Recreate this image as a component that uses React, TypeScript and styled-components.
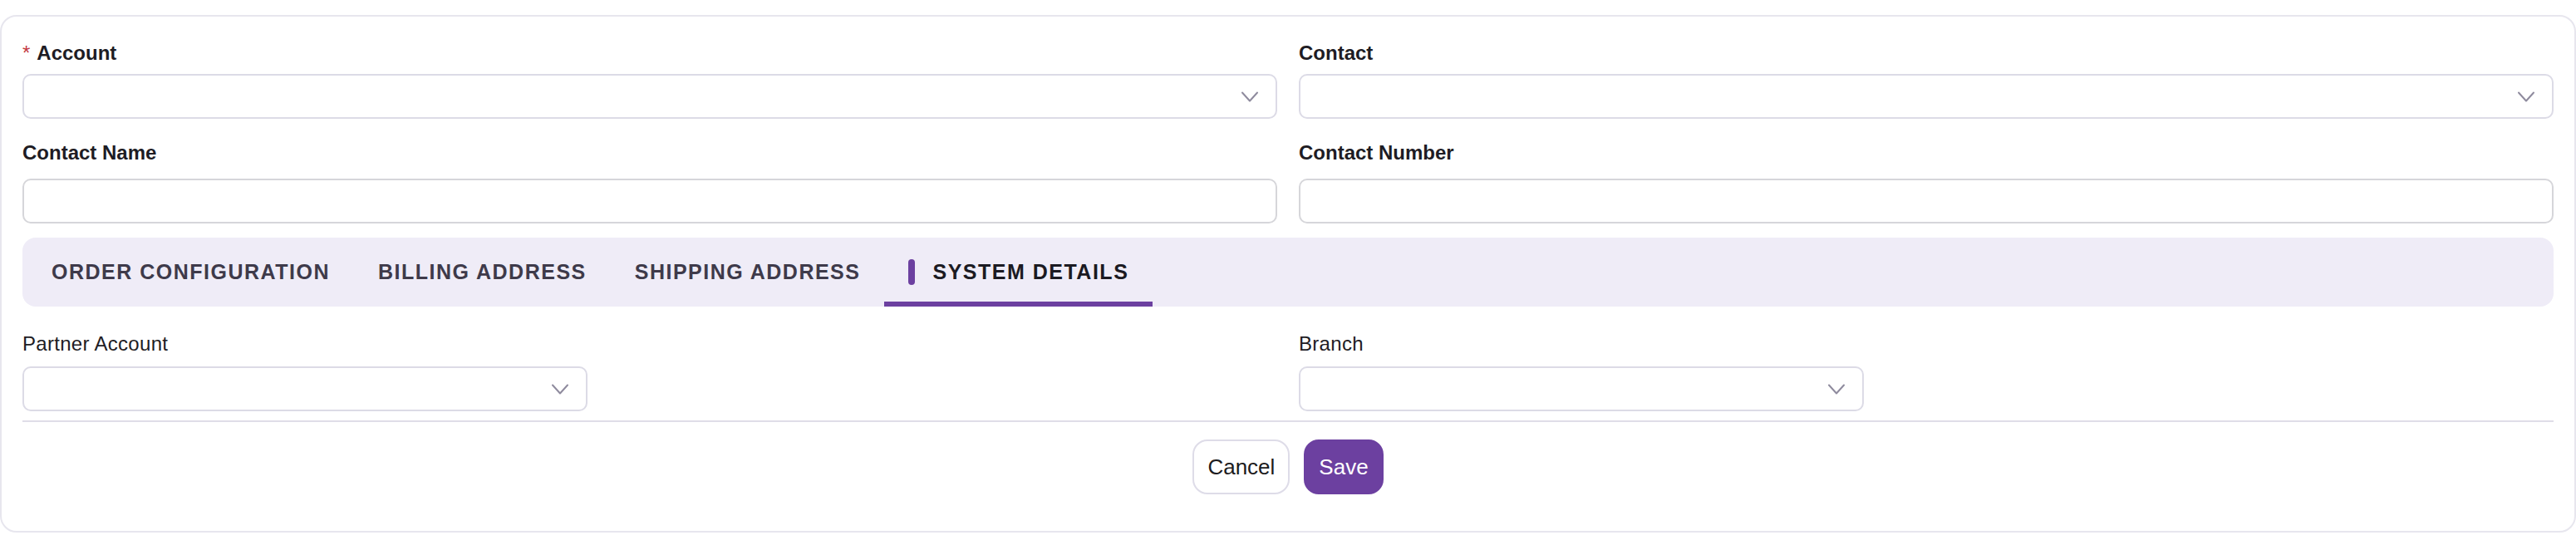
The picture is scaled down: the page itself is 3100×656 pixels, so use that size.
import React, { useState } from "react";
import styled, { createGlobalStyle } from "styled-components";

const GlobalStyle = createGlobalStyle`
  html, body {
    margin: 0;
    padding: 0;
    background: #ffffff;
  }
  body {
    font-family: "Liberation Sans", Arial, sans-serif;
    color: #1e1c24;
  }
  * {
    box-sizing: border-box;
  }
`;

const Page = styled.div`
  padding-top: 18px;
`;

const Card = styled.form`
  width: 100%;
  background: #ffffff;
  border: 2px solid #e7e6ee;
  border-radius: 20px;
  padding: 30px 25px 44px;
`;

const Grid = styled.div`
  display: grid;
  grid-template-columns: 1fr 1fr;
  column-gap: 26px;
  row-gap: 27px;
`;

const BottomGrid = styled(Grid)`
  margin-top: 31px;
`;

const Field = styled.div`
  display: flex;
  flex-direction: column;
`;

const Label = styled.label<{ $gap: number; $bold?: boolean }>`
  display: block;
  font-size: 24px;
  line-height: 28px;
  font-weight: ${(p) => (p.$bold ? 700 : 400)};
  letter-spacing: ${(p) => (p.$bold ? "0" : "0.3px")};
  color: #1e1c24;
  margin-bottom: ${(p) => p.$gap}px;
`;

const Required = styled.span`
  color: #c43a42;
  font-weight: 400;
  margin-right: 8px;
`;

const SelectBox = styled.div<{ $width?: string }>`
  width: ${(p) => p.$width || "100%"};
  height: 54px;
  border: 2px solid #dcdbe6;
  border-radius: 10px;
  background: #ffffff;
  display: flex;
  align-items: center;
  justify-content: flex-end;
  padding-right: 21px;
  cursor: pointer;
`;

const TextInput = styled.input`
  width: 100%;
  height: 54px;
  border: 2px solid #d6d6da;
  border-radius: 10px;
  background: #ffffff;
  padding: 0 16px;
  font-family: inherit;
  font-size: 24px;
  outline: none;
`;

const TabBar = styled.div`
  margin-top: 17px;
  height: 83px;
  background: #efecf7;
  border-radius: 16px;
  display: flex;
  align-items: stretch;
  padding-left: 6px;
`;

const Tab = styled.button<{ $active?: boolean }>`
  display: flex;
  align-items: center;
  gap: 21px;
  padding: 0 29px;
  border: none;
  border-bottom: 6px solid ${(p) => (p.$active ? "#6c40a0" : "transparent")};
  border-top: 6px solid transparent;
  background: transparent;
  font-family: "Liberation Sans", Arial, sans-serif;
  font-size: 25px;
  line-height: 25px;
  font-weight: 700;
  letter-spacing: 1.5px;
  color: ${(p) => (p.$active ? "#1b1a22" : "#3e3a4a")};
  cursor: pointer;
`;

const Marker = styled.span`
  width: 8px;
  height: 31px;
  border-radius: 4px;
  background: #6c40a0;
`;

const Divider = styled.hr`
  margin: 11px 0 0;
  border: none;
  height: 2px;
  background: #dfdde8;
`;

const Actions = styled.div`
  margin-top: 21px;
  display: flex;
  justify-content: center;
  gap: 17px;
`;

const Button = styled.button<{ $primary?: boolean }>`
  height: 66px;
  padding: 0 16px;
  border-radius: 18px;
  border: 2px solid ${(p) => (p.$primary ? "#6c40a0" : "#dedce8")};
  background: ${(p) => (p.$primary ? "#6c40a0" : "#ffffff")};
  color: ${(p) => (p.$primary ? "#ffffff" : "#1c1b20")};
  font-family: "Liberation Sans", Arial, sans-serif;
  font-size: 26px;
  cursor: pointer;
`;

const Chevron = () => (
  <svg width="20" height="13" viewBox="0 0 20 13" fill="none">
    <polyline
      points="1,1.5 10,11.5 19,1.5"
      stroke="#8f8b9e"
      strokeWidth="2"
      strokeLinecap="round"
      strokeLinejoin="round"
    />
  </svg>
);

const tabs = [
  "ORDER CONFIGURATION",
  "BILLING ADDRESS",
  "SHIPPING ADDRESS",
  "SYSTEM DETAILS",
];

export default function App() {
  const [active, setActive] = useState(3);

  return (
    <>
      <GlobalStyle />
      <Page>
        <Card onSubmit={(e) => e.preventDefault()}>
          <Grid>
            <Field>
              <Label $gap={11} $bold>
                <Required>*</Required>Account
              </Label>
              <SelectBox>
                <Chevron />
              </SelectBox>
            </Field>
            <Field>
              <Label $gap={11} $bold>
                Contact
              </Label>
              <SelectBox>
                <Chevron />
              </SelectBox>
            </Field>
            <Field>
              <Label $gap={17} $bold>
                Contact Name
              </Label>
              <TextInput type="text" />
            </Field>
            <Field>
              <Label $gap={17} $bold>
                Contact Number
              </Label>
              <TextInput type="text" />
            </Field>
          </Grid>

          <TabBar>
            {tabs.map((t, i) => (
              <Tab
                key={t}
                type="button"
                $active={i === active}
                onClick={() => setActive(i)}
              >
                {i === active && <Marker />}
                {t}
              </Tab>
            ))}
          </TabBar>

          <BottomGrid>
            <Field>
              <Label $gap={13}>Partner Account</Label>
              <SelectBox $width="45%">
                <Chevron />
              </SelectBox>
            </Field>
            <Field>
              <Label $gap={13}>Branch</Label>
              <SelectBox $width="45%">
                <Chevron />
              </SelectBox>
            </Field>
          </BottomGrid>

          <Divider />

          <Actions>
            <Button type="button">Cancel</Button>
            <Button type="submit" $primary>
              Save
            </Button>
          </Actions>
        </Card>
      </Page>
    </>
  );
}
